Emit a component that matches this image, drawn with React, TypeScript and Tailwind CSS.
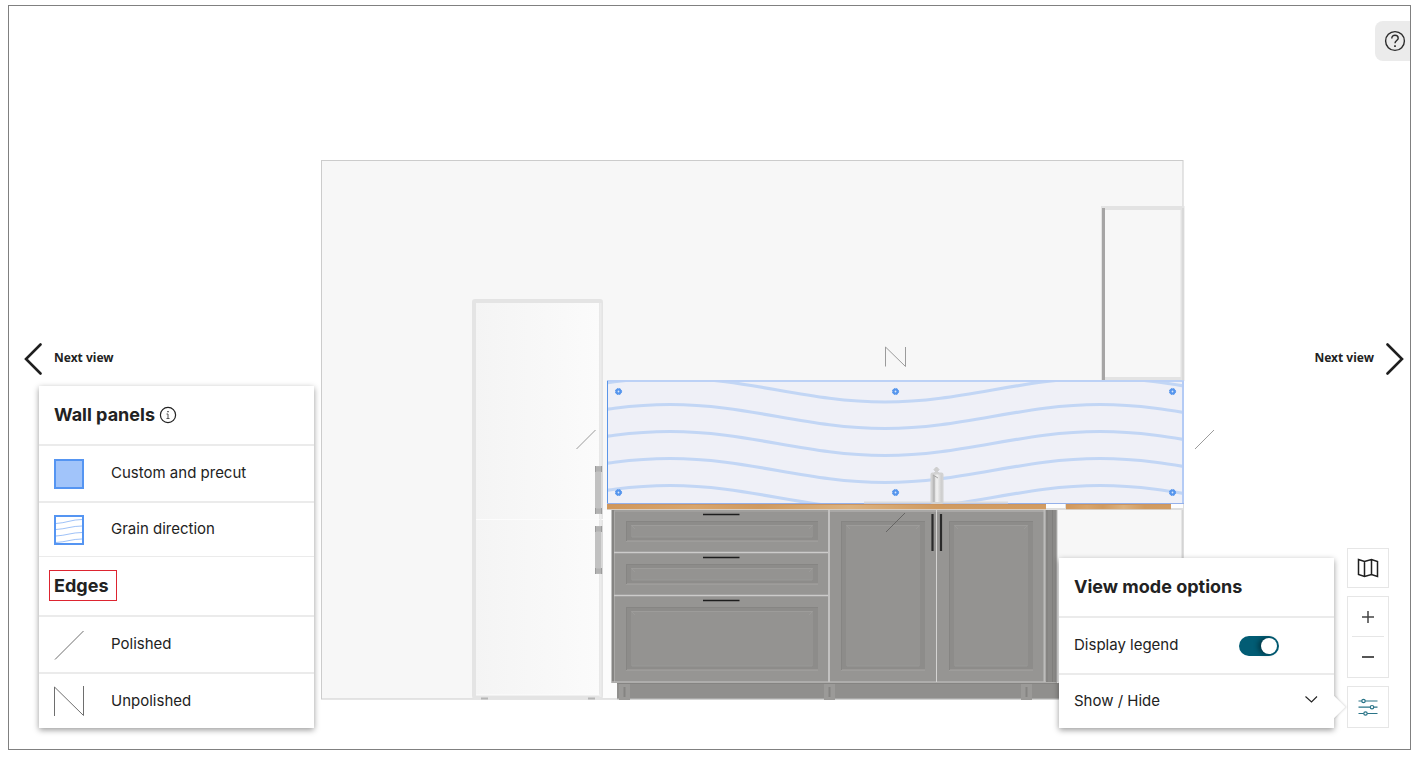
import { useState } from "react";
import type { ReactNode } from "react";

const waveOffsets = [378, 404.5, 431.5, 458.5, 485.5];
const screws = [
  [618, 392],
  [895, 392],
  [1172, 392],
  [618, 493],
  [895, 493],
  [1172, 493],
];

function wavePath(y: number) {
  const low = y + 24;
  return `M455 ${low}C533 ${low} 592 ${y} 670 ${y}S807 ${low} 885 ${low}S1022 ${y} 1100 ${y}S1237 ${low} 1315 ${low}`;
}

function Front({ x, y, w, h }: { x: number; y: number; w: number; h: number }) {
  return (
    <g>
      <rect x={x} y={y} width={w} height={h} fill="#8d8c8a" />
      <path d={`M${x} ${y + h}H${x + w}`} stroke="#a6a5a3" />
      <path d={`M${x} ${y + 0.5}H${x + w}M${x + 0.5} ${y}V${y + h}`} stroke="#868583" />
      <rect x={x + 5} y={y + 4} width={w - 10} height={h - 8} fill="#949391" />
      <path d={`M${x + 5} ${y + 4.5}H${x + w - 5}`} stroke="#9d9c9a" />
      <path d={`M${x + 5} ${y + 4}l4 4M${x + w - 5} ${y + 4}l-4 4`} stroke="#9b9a98" />
      <path d={`M${x + 6} ${y + h - 4}H${x + w - 6}`} stroke="#999896" />
    </g>
  );
}

function KitchenDrawing() {
  return (
    <svg viewBox="314 150 903 556" className="block w-full" role="img" aria-label="Kitchen wall elevation">
      <defs>
        <clipPath id="panel">
          <rect x="608" y="381" width="575" height="122" />
        </clipPath>
        <linearGradient id="fridge" x1="0" x2="1" y1="0" y2="0">
          <stop offset="0" stopColor="#f4f4f4" />
          <stop offset="1" stopColor="#fbfbfb" />
        </linearGradient>
        <linearGradient id="wood" x1="0" x2="1" y1="0" y2="0">
          <stop offset="0" stopColor="#d0975b" />
          <stop offset="0.2" stopColor="#d8a56c" />
          <stop offset="0.35" stopColor="#cf9a60" />
          <stop offset="0.55" stopColor="#dcb27f" />
          <stop offset="0.75" stopColor="#d09b61" />
          <stop offset="1" stopColor="#d29c62" />
        </linearGradient>
        <linearGradient id="tap" x1="0" x2="1" y1="0" y2="0">
          <stop offset="0" stopColor="#b5b5b5" />
          <stop offset="0.5" stopColor="#f2f2f2" />
          <stop offset="1" stopColor="#c4c4c4" />
        </linearGradient>
      </defs>

      <rect x="321.5" y="160.5" width="861.5" height="538.5" fill="#f7f7f7" stroke="#cccccc" />

      <rect x="603" y="510" width="14" height="188" fill="#fcfcfc" />
      <rect x="474" y="301" width="127" height="396" rx="1" fill="url(#fridge)" stroke="#e4e4e4" strokeWidth="4" />
      <path d="M476 519.5H603M476 695H600" stroke="#fcfcfc" />
      <path d="M600.5 303V697" stroke="#ececec" strokeWidth="2" />
      <path d="M481 698.5H488M588 698.5H595" stroke="#b5b5b5" strokeWidth="2" />
      {[466, 526].map((y) => (
        <g key={y}>
          <rect x="595" y={y} width="8" height="48" fill="#d8d8d8" />
          <rect x="595" y={y} width="6" height="48" fill="#c1c1c1" />
          <path d={`M595 ${y + 3}h7M595 ${y + 45}h7`} stroke="#b2b2b2" strokeWidth="5" />
          <path d={`M595.5 ${y}v6M601.5 ${y}v6M595.5 ${y + 42}v6M601.5 ${y + 42}v6`} stroke="#9c9c9c" />
        </g>
      ))}

      <rect x="1103" y="208" width="79.500" height="171" fill="#f7f7f7" stroke="#e3e3e3" strokeWidth="4" />
      <path d="M1183 208V380" stroke="#cfcfcf" />
      <path d="M1103.5 208V381" stroke="#a6a5a5" strokeWidth="3" />

      <rect x="607" y="380" width="577" height="124" fill="#eff0f7" />
      <g clipPath="url(#panel)" fill="none" stroke="#c2d6f5" strokeWidth="3.200">
        {waveOffsets.map((y) => (
          <path key={y} d={wavePath(y)} />
        ))}
      </g>
      <path d="M607 381H1184" stroke="#bcd1f6" strokeWidth="2" />
      <path d="M1183 381V504" stroke="#b4cbf5" strokeWidth="2" />
      <path d="M607.5 381V504" stroke="#5b95e8" />
      <path d="M607 503.5H1184" stroke="#94b0ea" />
      {screws.map(([x, y]) => (
        <g key={`${x}-${y}`}>
          <circle cx={x + 0.5} cy={y - 0.5} r="2" fill="#dbe8fb" stroke="#5595ed" strokeWidth="2.200" />
          <circle cx={x + 0.5} cy={y - 0.5} r="3.1" fill="none" stroke="#5595ed" strokeDasharray="1.5 1" />
        </g>
      ))}

      <rect x="1046" y="504" width="138" height="6" fill="#dedede" />
      <rect x="1046" y="504" width="19" height="4" fill="#fdfdfd" />
      <rect x="1171" y="504" width="12" height="4" fill="#fdfdfd" />
      <path d="M1182.5 510V699" stroke="#d4d4d4" strokeWidth="2" />
      <rect x="607" y="504" width="439" height="5" fill="url(#wood)" />
      <rect x="1066" y="504" width="105" height="5" fill="url(#wood)" />
      <path d="M607 504.5H1046M1066 504.5H1171" stroke="#cc9560" />
      <path d="M607 509.5H1046M1066 509.5H1171" stroke="#d8ccc0" />
      <path d="M864 502.5H1008" stroke="#dbdcdf" strokeWidth="2" />
      <path d="M936.5 467l2.500 2.500-1.500 2 1.500 2h-5l1.500-2-1.500-2z" fill="#cfcfcf" stroke="#cccccc" />
      <rect x="931.5" y="473.500" width="11" height="29.500" rx="1" fill="url(#tap)" stroke="#d2d2d2" strokeWidth="2" />
      <path d="M933 475l5 3M934 476V502" stroke="#a5a5a5" />

      <rect x="611" y="510" width="446" height="173" fill="#969593" />
      <path d="M611.5 510V683" stroke="#c0c0bf" />
      <path d="M613 510V682" stroke="#858482" strokeWidth="2" />
      <path d="M614.5 511V682" stroke="#aaa9a7" />
      <rect x="617" y="683" width="445" height="16" fill="#908f8d" />
      <path d="M617 699H1062" stroke="#c1c1c0" />
      <path d="M611 682H1057" stroke="#c6c5c4" />
      <path d="M617 683.5H1057" stroke="#858482" />
      {[619, 824, 1021].map((x) => (
        <g key={x}>
          <rect x={x} y="684" width="11" height="16" fill="#9b9a98" />
          <path d={`M${x + 5.5} 687v10`} stroke="#858482" strokeWidth="2" />
        </g>
      ))}
      <path d="M614 511H828" stroke="#a9a8a6" />
      <path d="M614 552.5H828M614 595.500H828" stroke="#cccbca" strokeWidth="1.500" />
      <path d="M829 510V682" stroke="#c2c1c0" strokeWidth="2" />
      <path d="M830 511H1044" stroke="#bbbab9" />
      <path d="M936.5 510V682" stroke="#d4d3d2" />
      <path d="M1044.5 510V682" stroke="#bdbcbb" strokeWidth="2" />
      <rect x="1046" y="510" width="11" height="172" fill="#8b8a88" />
      <path d="M1047 510V682M1052.5 510V682" stroke="#807f7d" />
      <path d="M1057 510V682" stroke="#bdbdbc" />
      <Front x={626} y={521} w={192} h={20} />
      <Front x={626} y={564} w={192} h={20} />
      <Front x={626} y={607} w={192} h={63} />
      <Front x={841} y={521} w={84} h={149} />
      <Front x={949} y={521} w={84} h={149} />
      <path d="M703 514.5H739.500M703 557.5H739.500M703 600.5H739.500" stroke="#1d1d1d" strokeWidth="1.700" />
      <path d="M932.5 514V551M941 514V551" stroke="#2a2a2a" strokeWidth="2.200" />

      <g fill="none" stroke="#9b9b9b">
        <path d="M885.5 366.500V347L905.5 366.500V347" />
        <path d="M576.500 449L595.500 430M1195 449L1214 430" />
        <path d="M886 532L905 513" stroke="#666564" />
      </g>
    </svg>
  );
}

function NextView({ back = false }: { back?: boolean }) {
  return (
    <button
      type="button"
      className={`flex h-9 items-center gap-3 font-['Noto_Sans',sans-serif] text-xs font-bold text-[#222222] ${back ? "self-start" : "flex-row-reverse self-end"}`}
    >
      <svg viewBox="0 0 18 36" className="h-9 w-4.5" fill="none" stroke="#1f1f1f" strokeWidth="2.6" strokeLinecap="round">
        <path d={back ? "M16.500 3.500L2 18L16.500 32.500" : "M1.500 3.500L16 18L1.500 32.500"} />
      </svg>
      <span className="pb-0.5">Next view</span>
    </button>
  );
}

function LegendRow({ icon, label, className }: { icon: ReactNode; label: string; className: string }) {
  return (
    <li className={`flex items-center gap-[27px] border-[#ebebeb] px-[15px] ${className}`}>
      {icon}
      <span>{label}</span>
    </li>
  );
}

function Legend() {
  return (
    <section className="ml-[15px] w-[275px] bg-white text-[15px] shadow-[0_2px_6px_rgba(0,0,0,0.4)]">
      <header className="flex h-[60px] items-center gap-1 border-b-2 border-[#ebebeb] px-[15px]">
        <h2 className="text-lg font-bold">Wall panels</h2>
        <button type="button" aria-label="About wall panels">
          <svg viewBox="0 0 18 18" className="size-[18px]" fill="none" stroke="#222222">
            <circle cx="9" cy="9" r="7.600" strokeWidth="1.200" />
            <path d="M7.500 8H9V12.500M7.500 12.500H10.500" stroke="#555555" />
            <path d="M9 5V6.300" strokeWidth="1.300" />
          </svg>
        </button>
      </header>
      <ul>
        <LegendRow
          className="h-[57px] border-b-2"
          label="Custom and precut"
          icon={<span className="size-[30px] border-2 border-[#5595f2] bg-[#a1c4fa]" />}
        />
        <LegendRow
          className="h-[54px] border-b"
          label="Grain direction"
          icon={
            <svg viewBox="0 0 30 30" className="size-[30px]" fill="none">
              <path
                d="M2 8.500C12 8 18 4.500 28 4.500M2 14.500C12 14 18 11 28 11M2 21C12 20.500 18 17.500 28 17.500M2 27.500C12 27 18 24 28 24"
                stroke="#9fc2f8"
              />
              <rect x="1" y="1" width="28" height="28" stroke="#5595f2" strokeWidth="2" />
            </svg>
          }
        />
      </ul>
      <header className="flex h-[60px] items-center border-b-2 border-[#ebebeb] px-2.5 pb-0.5">
        <h2 className="border border-[#dd2430] py-0.5 pr-2 pl-1 text-lg leading-[25px] font-bold">Edges</h2>
      </header>
      <ul>
        <LegendRow
          className="h-[57px] border-b-2"
          label="Polished"
          icon={
            <svg viewBox="0 0 30 30" className="size-[30px]" stroke="#6e6e6e">
              <path d="M1 29.500L29.500 1" />
            </svg>
          }
        />
        <LegendRow
          className="h-[54px]"
          label="Unpolished"
          icon={
            <svg viewBox="0 0 30 30" className="size-[30px]" fill="none" stroke="#6e6e6e">
              <path d="M0.500 30V1L29.500 29.500V0" />
            </svg>
          }
        />
      </ul>
    </section>
  );
}

function ViewOptions({ legend, onLegend }: { legend: boolean; onLegend: (on: boolean) => void }) {
  return (
    <section className="absolute right-[55px] bottom-0 w-[275px] bg-white text-[15px] shadow-[0_2px_6px_rgba(0,0,0,0.4)]">
      <span className="absolute -right-2 bottom-[13px] size-4 rotate-45 bg-white shadow-[1px_-1px_2px_rgba(0,0,0,0.12)]" />
      <div className="relative bg-white">
        <header className="flex h-[60px] items-center border-b-2 border-[#ebebeb] px-[15px]">
          <h2 className="text-lg font-bold">View mode options</h2>
        </header>
        <div className="flex h-[57px] items-center justify-between border-b-2 border-[#ebebeb] pr-[55px] pl-[15px]">
          <label htmlFor="legend">Display legend</label>
          <input
            id="legend"
            type="checkbox"
            checked={legend}
            onChange={(e) => onLegend(e.target.checked)}
            className="h-5 w-10 cursor-pointer appearance-none rounded-full bg-gray-400 p-0.5 before:block before:size-4 before:rounded-full before:bg-white before:shadow-[-3px_0_5px_rgba(0,0,0,0.4)] checked:bg-[#025c74] checked:before:ml-5"
          />
        </div>
        <button type="button" className="flex h-[53px] w-full items-center justify-between pr-4 pl-[15px]">
          <span>Show / Hide</span>
          <svg viewBox="0 0 14 10" className="mb-1.5 h-2.5 w-3.5" fill="none" stroke="#222222" strokeWidth="1.100">
            <path d="M1.500 2.500L7.500 8L13 2.500" />
          </svg>
        </button>
      </div>
    </section>
  );
}

export default function App() {
  const [legend, setLegend] = useState(true);

  return (
    <div className="min-h-screen bg-white pt-[5px] pr-1.5 pb-2 pl-2 font-[Inter,sans-serif] text-[#222222]">
      <main className="flex min-h-[calc(100vh-13px)] border border-[#808080]">
        <aside className="flex shrink-0 flex-col justify-end gap-[9px] pb-[21px] pl-[15px]">
          <NextView back />
          {legend && <Legend />}
        </aside>

        <div className="mb-[43px] min-w-0 flex-1 self-end">
          <KitchenDrawing />
        </div>

        <aside className="flex w-[193px] shrink-0 flex-col items-end pt-[15px] pb-[21px]">
          <button type="button" aria-label="Help" className="flex h-10 w-[35px] items-center justify-center rounded-l-lg bg-[#ebebeb] pl-1">
            <svg viewBox="0 0 22 22" className="size-[22px]" fill="none" stroke="#2b2b2b" strokeWidth="1.400">
              <circle cx="11" cy="11" r="9.400" />
              <path d="M7.800 8.500C7.800 6.400 9.200 5.300 11 5.300S14.200 6.500 14.200 8.200C14.200 10.500 11 10.700 11 13.300" />
              <path d="M11 15.300V16.900" strokeWidth="1.700" />
            </svg>
          </button>
          <div className="mt-auto mb-[171px] flex pr-1.5">
            <NextView />
          </div>
          <div className="mr-[21px] flex w-[42px] flex-col gap-2">
            <button type="button" aria-label="Map" className="flex h-10 items-center justify-center border border-[#e6e6e6]">
              <svg viewBox="0 0 22 20" className="h-5 w-[22px]" fill="none" stroke="#1f1f1f" strokeWidth="1.500">
                <path d="M1.500 1.500L7.500 3.500L14.500 1.500L20.500 3.500V18.500L14.500 16.500L7.500 18.500L1.500 16.500ZM7.500 3.500V18.500M14.500 1.500V16.500" />
              </svg>
            </button>
            <div className="flex h-[82px] flex-col items-center border border-[#e6e6e6]">
              <button type="button" aria-label="Zoom in" className="flex h-10 w-8 items-center justify-center border-b border-[#e6e6e6]">
                <svg viewBox="0 0 12 12" className="size-3" stroke="#444444" strokeWidth="1.500">
                  <path d="M0 6H12M6 0V12" />
                </svg>
              </button>
              <button type="button" aria-label="Zoom out" className="flex h-10 w-8 items-center justify-center">
                <svg viewBox="0 0 12 12" className="size-3" stroke="#555555" strokeWidth="2">
                  <path d="M0 6H12" />
                </svg>
              </button>
            </div>
            <div className="relative">
              <button type="button" aria-label="View mode" className="flex size-[42px] items-center justify-center border border-[#e6e6e6]">
                <svg viewBox="0 0 20 18" className="h-[18px] w-5" fill="white" stroke="#2a7488" strokeWidth="1.200">
                  <path d="M0.500 3H19.500M0.500 9.200H19.500M0.500 15.500H19.500" />
                  <circle cx="5.500" cy="3" r="1.700" />
                  <circle cx="14" cy="9.200" r="1.700" />
                  <circle cx="7.500" cy="15.500" r="1.700" />
                </svg>
              </button>
              <ViewOptions legend={legend} onLegend={setLegend} />
            </div>
          </div>
        </aside>
      </main>
    </div>
  );
}
